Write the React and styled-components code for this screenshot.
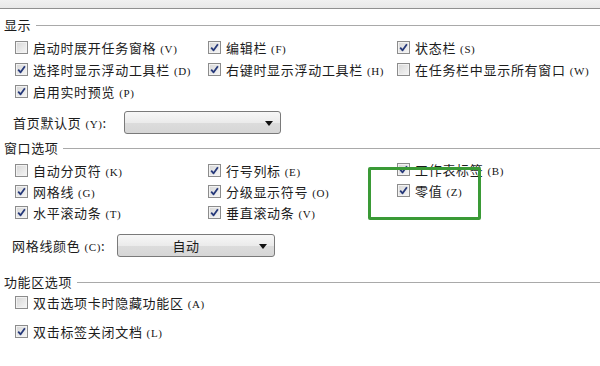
import React from "react";
import styled, { createGlobalStyle } from "styled-components";

const GlobalStyle = createGlobalStyle`
  html, body { margin: 0; padding: 0; background: #ffffff; }
  body {
    width: 600px; height: 366px; overflow: hidden;
    font-family: "Noto Sans CJK SC", "Liberation Sans", sans-serif;
    color: #1c1c1c;
  }
`;

const Page = styled.div`
  width: 600px;
  height: 366px;
  display: flex;
  flex-direction: column;
  background: #fff;
`;

const TopBar = styled.div`
  height: 8px;
  background: linear-gradient(#f0f0f0, #e8e8e8);
  border-bottom: 1px solid #8f8f8f;
  flex: none;
`;

const Section = styled.div`
  position: relative;
  display: flex;
  flex-direction: column;
  margin-top: ${(p) => p.$top}px;
`;

const Header = styled.div`
  display: flex;
  align-items: center;
  height: 16px;
  padding-left: 4px;
  font-size: 13px;
  letter-spacing: 0.6px;
  line-height: 16px;
  &::after {
    content: "";
    flex: 1;
    height: 1px;
    background: #a9a9a9;
    margin-left: 5px;
  }
`;

const Grid = styled.div`
  display: grid;
  grid-template-columns: 193px 189px 1fr;
  grid-auto-rows: ${(p) => p.$row}px;
  row-gap: ${(p) => p.$gap || 0}px;
  padding-left: 15px;
  margin-top: ${(p) => p.$top}px;
`;

const Item = styled.label`
  display: flex;
  align-items: center;
  gap: 5px;
  font-size: 13px;
  letter-spacing: 0.7px;
  white-space: nowrap;
  transform: translateY(${(p) => p.$shift || 0}px);
`;

const Key = styled.span`
  font-family: "Liberation Serif", "DejaVu Serif", serif;
  font-size: 11px;
  letter-spacing: 0.6px;
  margin-left: 4px;
  color: #151515;
`;

const Box = styled.span`
  width: 11px;
  height: 11px;
  flex: none;
  border: 1px solid #8c8c8c;
  background: linear-gradient(135deg, #d6d6d6, #f6f6f6);
  box-shadow: inset 0 0 0 1px #f2f2f2;
  display: flex;
  align-items: center;
  justify-content: center;
`;

const Check = ({ on }) => (
  <Box>
    {on && (
      <svg width="9" height="9" viewBox="0 0 9 9">
        <path d="M1.2 4.6 L3.6 7.3 L7.9 1.3" fill="none" stroke="#26397a" strokeWidth="1.8" strokeLinejoin="round" />
      </svg>
    )}
  </Box>
);

const Opt = ({ on, text, k, shift }) => (
  <Item $shift={shift}>
    <Check on={on} />
    <span>
      {text}
      <Key>({k})</Key>
    </span>
  </Item>
);

const FieldRow = styled.div`
  display: flex;
  align-items: center;
  padding-left: ${(p) => p.$pad}px;
  margin-top: ${(p) => p.$top}px;
  height: 25px;
`;

const FieldLabel = styled.span`
  width: ${(p) => p.$w}px;
  font-size: 13px;
  letter-spacing: 0.7px;
  white-space: nowrap;
`;

const Select = styled.div`
  position: relative;
  width: ${(p) => p.$w}px;
  height: 23px;
  box-sizing: border-box;
  border: 1px solid #7a7a7a;
  border-radius: 3px;
  background: linear-gradient(#f7f7f7 0%, #ebebeb 50%, #dcdcdc 51%, #d6d6d6 100%);
  display: flex;
  align-items: center;
  justify-content: center;
  font-size: 13px;
  letter-spacing: 0.6px;
  padding-right: 20px;
`;

const Arrow = styled.span`
  position: absolute;
  right: 7px;
  top: 9px;
  width: 0;
  height: 0;
  border-left: 4px solid transparent;
  border-right: 4px solid transparent;
  border-top: 5px solid #111;
`;

const Highlight = styled.div`
  position: absolute;
  left: 368px;
  top: 27px;
  width: 113px;
  height: 53px;
  box-sizing: border-box;
  border: 3px solid #3a9a36;
  border-radius: 2px;
  pointer-events: none;
`;

export default function App() {
  return (
    <Page>
      <GlobalStyle />
      <TopBar />
      <Section $top={8}>
        <Header>显示</Header>
        <Grid $row={22} $top={3}>
          <Opt on={false} text="启动时展开任务窗格" k="V" />
          <Opt on text="编辑栏" k="F" />
          <Opt on text="状态栏" k="S" />
          <Opt on text="选择时显示浮动工具栏" k="D" />
          <Opt on text="右键时显示浮动工具栏" k="H" />
          <Opt on={false} text="在任务栏中显示所有窗口" k="W" />
          <Opt on text="启用实时预览" k="P" />
        </Grid>
        <FieldRow $pad={13} $top={8}>
          <FieldLabel $w={111}>
            首页默认页<Key>(Y)</Key>:
          </FieldLabel>
          <Select $w={157}>
            <Arrow />
          </Select>
        </FieldRow>
      </Section>
      <Section $top={5}>
        <Header>窗口选项</Header>
        <Grid $row={21} $top={4}>
          <Opt on={false} text="自动分页符" k="K" />
          <Opt on text="行号列标" k="E" />
          <Opt on text="工作表标签" k="B" shift={-1} />
          <Opt on text="网格线" k="G" />
          <Opt on text="分级显示符号" k="O" />
          <Opt on text="零值" k="Z" shift={-1} />
          <Opt on text="水平滚动条" k="T" />
          <Opt on text="垂直滚动条" k="V" />
        </Grid>
        <Highlight />
        <FieldRow $pad={12} $top={10}>
          <FieldLabel $w={105}>
            网格线颜色<Key>(C)</Key>:
          </FieldLabel>
          <Select $w={158}>
            自动
            <Arrow />
          </Select>
        </FieldRow>
      </Section>
      <Section $top={16}>
        <Header>功能区选项</Header>
        <Grid $row={22} $gap={7} $top={1}>
          <Opt on={false} text="双击选项卡时隐藏功能区" k="A" />
          <div />
          <div />
          <Opt on text="双击标签关闭文档" k="L" />
        </Grid>
      </Section>
    </Page>
  );
}
